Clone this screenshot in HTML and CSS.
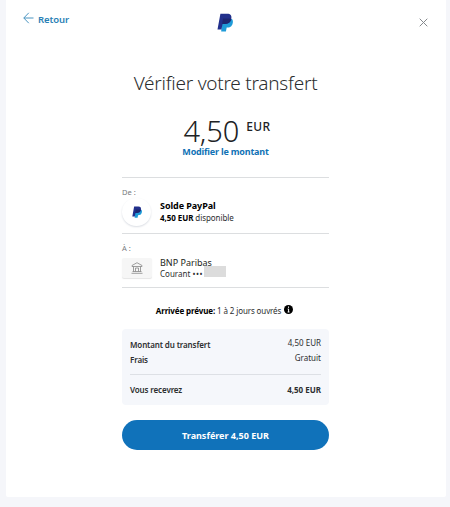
FILE: index.html
```html
<!DOCTYPE html>
<html lang="fr">
<head>
<meta charset="utf-8">
<title>Vérifier votre transfert</title>
<link rel="stylesheet" href="styles.css">
</head>
<body>
<svg class="defs" width="0" height="0" aria-hidden="true">
  <symbol id="paypal" viewBox="0 0 16 19">
    <path fill="#1f9bd8" d="M5 6h10c1 1 1.100 2.800.7 4.200C15 13.600 12.600 14.600 9.700 14.600L8.900 18.600H4.200z"/>
    <path fill="#22308c" d="M3.400.7h6.800c3.300 0 4.700 1.800 4.100 5-.6 3.500-3 5.200-6.500 5.200H5.600L4.400 16.500H.5z"/>
    <path fill="#1d2670" d="M6.100 5.500h7.300c.4.100.7.300.9.500-.7 3.300-3.100 4.900-6.500 4.900H5.100z"/>
  </symbol>
</svg>
<main class="sheet">
  <header class="top">
    <a class="back"><svg width="11" height="12" viewBox="0 0 11 12"><path d="M10.500 6H.8M5.800.8.8 6l5 5.200"/></svg><span>Retour</span></a>
    <svg class="logo" width="16" height="19"><use href="#paypal"/></svg>
    <svg class="close" width="9" height="9" viewBox="0 0 9 9"><path d="M.7.700l7.600 7.600M8.300.700.7 8.300"/></svg>
  </header>
  <h1>Vérifier votre transfert</h1>
  <div class="amount"><span class="value">4,50</span><span class="currency">EUR</span></div>
  <a class="edit">Modifier le montant</a>
  <div class="content">
    <section class="source">
      <p class="label">De :</p>
      <div class="account">
        <span class="circle"><svg width="10" height="12"><use href="#paypal"/></svg></span>
        <div><p class="name strong">Solde PayPal</p><p class="detail balance"><b>4,50 EUR</b> disponible</p></div>
      </div>
    </section>
    <section class="source target">
      <p class="label">À :</p>
      <div class="account">
        <span class="bank"><svg width="12" height="12" viewBox="0 0 12 12"><path d="M1 3.500 6 .7l5 2.800v1H1zM2.500 4.500v5M9.500 4.500v5M4.500 6v3.500M7.500 6v3.500M4.500 6h3M1.500 9.500h9M.5 11.300h11"/></svg></span>
        <div><p class="name">BNP Paribas</p><p class="detail courant"><span>Courant <span class="dots">•••</span></span><i class="mask"></i></p></div>
      </div>
    </section>
    <p class="arrival"><span><b>Arrivée prévue:</b> 1 à 2 jours ouvrés</span><svg width="9" height="9" viewBox="0 0 9 9"><circle cx="4.500" cy="4.500" r="4.500"/><path d="M4.500 1.500v1.300M3.700 4h.9v3M3.600 7h1.900"/></svg></p>
    <dl class="summary">
      <div><dt>Montant du transfert</dt><dd>4,50 EUR</dd></div>
      <div><dt>Frais</dt><dd>Gratuit</dd></div>
      <div class="total"><dt>Vous recevrez</dt><dd>4,50 EUR</dd></div>
    </dl>
    <button>Transférer 4,50 EUR</button>
  </div>
</main>
</body>
</html>
```
FILE: styles.css
```css
* { box-sizing: border-box; margin: 0; padding: 0; }
body { height: 507px; background: #f5f6fa; padding: 0 4px 10px 6px; font-family: "Noto Sans", "Open Sans", sans-serif; color: #2c2e2f; overflow: hidden; }
.defs { position: absolute; }
.sheet { height: 497px; padding-right: 1px; background: #fff; border-radius: 0 0 2px 2px; display: flex; flex-direction: column; align-items: center; }
.top { width: 100%; height: 72px; padding: 12px 17px 0; display: grid; grid-template-columns: 1fr 16px 1fr; align-items: start; }
.back { display: flex; gap: 4px; color: #297fb5; font-size: 9.500px; line-height: 14px; font-weight: 600; letter-spacing: -.1px; }
.back svg { fill: none; stroke: #4b95c1; stroke-width: 1; }
.back span { margin-top: 1px; }
.close { justify-self: end; margin-top: 6px; fill: none; stroke: #85898d; stroke-width: 1; }
.logo { margin-top: 1px; margin-left: -1px; }
h1 { font-size: 19px; line-height: 24px; font-weight: 300; white-space: nowrap; margin-top: -1px; letter-spacing: -.25px; }
.amount { display: flex; gap: 7px; height: 49px; padding-top: 16px; margin-left: 3px; color: #202224; }
.value { font-size: 29px; line-height: 40px; height: 32px; font-weight: 300; letter-spacing: -.1px; }
.currency { font-size: 12px; line-height: 16px; margin-top: 8px; font-weight: 500; letter-spacing: .4px; }
.edit { color: #1072b5; font-size: 9px; line-height: 14px; margin-top: 1px; font-weight: 700; white-space: nowrap; letter-spacing: -.2px; }
.content { width: 207px; margin-top: 18px; }
.source { height: 56px; border-top: 1px solid #dcdee0; padding-top: 8px; }
.target { height: 55px; border-bottom: 1px solid #dcdee0; }
.label { font-size: 7.500px; line-height: 12px; color: #777a7e; }
.account { display: flex; gap: 9px; white-space: nowrap; }
.circle { width: 29px; height: 28px; border-radius: 50%; box-shadow: 0 1px 2px #d9dce2; display: grid; place-items: center; }
.bank { width: 30px; height: 20px; margin-top: 4px; border-radius: 2px; background: #f6f6f6; box-shadow: 0 1px 1px #e5e5e5; display: grid; place-items: center; }
.bank svg { fill: none; stroke: #888; stroke-width: .8; }
.name { font-size: 9px; line-height: 12px; margin-top: 2px; color: #1d1f20; }
.strong { font-weight: 700; color: #000; letter-spacing: -.07px; }
.detail { font-size: 8px; line-height: 10px; letter-spacing: -.07px; }
.target .account { gap: 8px; }
.target .name { margin-top: 3px; }
.balance { margin-top: 1px; }
.balance b { color: #000; }
.courant { display: flex; gap: 1px; font-size: 8px; letter-spacing: 0; }
.dots { letter-spacing: .5px; }
.mask { width: 22px; height: 11px; margin-top: -3px; background: #dcdcdc; }
.arrival { display: flex; justify-content: center; align-items: center; gap: 3px; height: 14px; margin-top: 15px; padding-right: 2px; font-size: 8px; white-space: nowrap; letter-spacing: -.12px; }
.arrival b { color: #000; }
.arrival svg { margin-top: -1px; }
.arrival path { fill: none; stroke: #fff; stroke-width: 1; }
.summary { height: 76px; margin-top: 12px; padding: 8px; background: #f5f7fb; border-radius: 4px; font-size: 8px; line-height: 15px; }
.summary div { display: flex; justify-content: space-between; }
.summary dt { font-weight: 600; letter-spacing: -.12px; }
.summary dd { margin-top: -2px; }
.summary .total { border-top: 1px solid #dde0e5; margin-top: 7px; padding-top: 7px; font-weight: 700; }
.total dd { margin-top: 0; }
button { display: block; width: 207px; height: 30px; margin-top: 15px; border: 0; border-radius: 15px; background: #1072ba; color: #fff; font: 700 9px "Noto Sans", sans-serif; }
```
